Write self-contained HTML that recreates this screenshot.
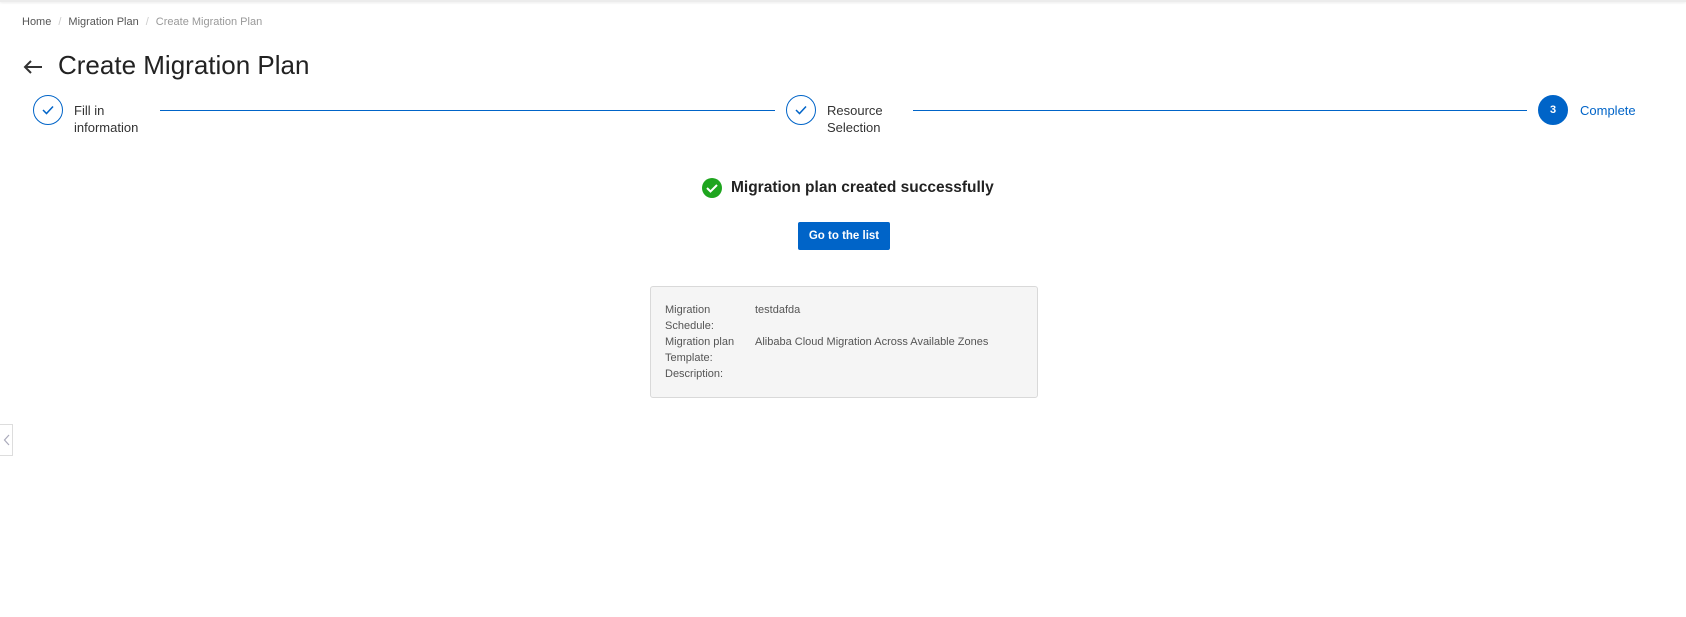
<!DOCTYPE html>
<html><head><meta charset="utf-8"><style>
*{margin:0;padding:0;box-sizing:border-box}
body{width:1686px;height:617px;background:#fff;font-family:"Liberation Sans",sans-serif;color:#333;position:relative;overflow:hidden}
.a{position:absolute}
.topbar{left:0;top:0;width:1686px;height:2px;background:#ececec;box-shadow:0 1px 2px rgba(0,0,0,.08)}
.bc{left:22px;top:16px;font-size:11px;color:#555}
.bc .s{color:#ccc;margin:0 7px}
.bc .c{color:#999}
.title{left:58px;top:50px;font-size:26px;color:#222}
.circ{width:30px;height:30px;border-radius:50%;border:1px solid #0064c8;display:flex;align-items:center;justify-content:center}
.step{font-size:13px;color:#333;line-height:17px}
.line{height:1px;background:#0064c8;top:110px}
.lbl{font-size:11px;color:#555;line-height:16px}
</style></head><body>
<div class="a topbar"></div>
<div class="a bc">Home<span class="s">/</span>Migration Plan<span class="s">/</span><span class="c">Create Migration Plan</span></div>
<svg class="a" style="left:22px;top:59px" width="22" height="16" viewBox="0 0 22 16"><path d="M20 8H3M9 2L3 8l6 6" fill="none" stroke="#333" stroke-width="2"/></svg>
<div class="a title">Create Migration Plan</div>

<div class="a circ" style="left:33px;top:95px"><svg width="12" height="10" viewBox="0 0 12 10"><path d="M1 5l3.5 3.5L11 1.5" fill="none" stroke="#0064c8" stroke-width="1.5"/></svg></div>
<div class="a step" style="left:74px;top:102px">Fill in<br>information</div>
<div class="a line" style="left:160px;width:615px"></div>
<div class="a circ" style="left:786px;top:95px"><svg width="12" height="10" viewBox="0 0 12 10"><path d="M1 5l3.5 3.5L11 1.5" fill="none" stroke="#0064c8" stroke-width="1.5"/></svg></div>
<div class="a step" style="left:827px;top:102px">Resource<br>Selection</div>
<div class="a line" style="left:913px;width:614px"></div>
<div class="a circ" style="left:1538px;top:95px;background:#0064c8;color:#fff;font-size:11px;font-weight:bold">3</div>
<div class="a step" style="left:1580px;top:102px;color:#0064c8">Complete</div>

<svg class="a" style="left:702px;top:178px" width="20" height="20" viewBox="0 0 20 20"><circle cx="10" cy="10" r="10" fill="#1ea51e"/><path d="M5 10l3.5 3.5L15 7" fill="none" stroke="#fff" stroke-width="2"/></svg>
<div class="a" style="left:731px;top:179px;font-size:15.5px;font-weight:bold;color:#222">Migration plan created successfully</div>
<div class="a" style="left:798px;top:222px;width:92px;height:28px;background:#0064c8;border-radius:2px;color:#fff;font-size:11.5px;font-weight:bold;display:flex;align-items:center;justify-content:center">Go to the list</div>

<div class="a" style="left:650px;top:286px;width:388px;height:112px;background:#f5f5f5;border:1px solid #d9d9d9;border-radius:3px"></div>
<div class="a lbl" style="left:665px;top:302px">Migration<br>Schedule:<br>Migration plan<br>Template:<br>Description:</div>
<div class="a lbl" style="left:755px;top:302px">testdafda<br><br>Alibaba Cloud Migration Across Available Zones</div>

<div class="a" style="left:0;top:424px;width:13px;height:32px;border:1px solid #ddd;border-left:none;background:#fff"></div>
<svg class="a" style="left:3px;top:434px" width="7" height="12" viewBox="0 0 7 12"><path d="M6 1L1.5 6 6 11" fill="none" stroke="#aab" stroke-width="1.2"/></svg>
</body></html>
